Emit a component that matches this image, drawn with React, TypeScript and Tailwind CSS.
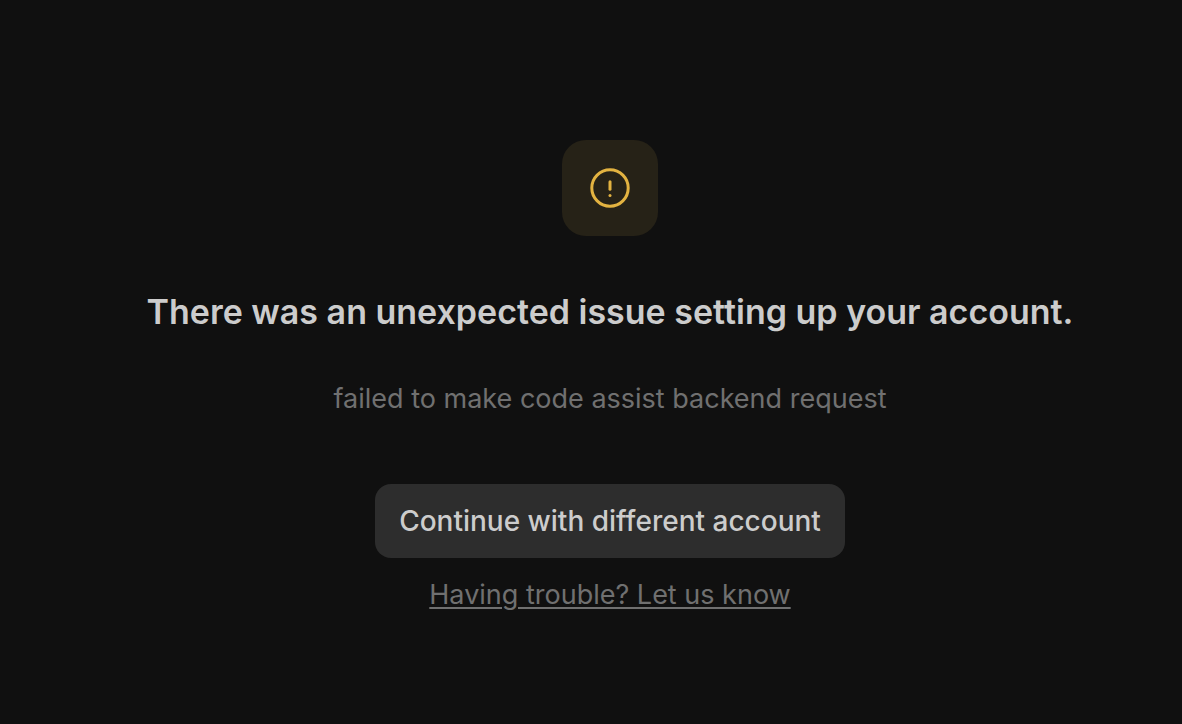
import React from 'react';

const AlertIcon: React.FC = () => (
  <svg width="40" height="40" viewBox="0 0 40 40" fill="none" stroke="currentColor" strokeWidth="3" strokeLinecap="round" aria-hidden="true">
    <circle cx="20" cy="20" r="18.2" />
    <path d="M20 13.7v7.6" />
    <circle cx="20" cy="27.4" r="1.5" fill="currentColor" stroke="none" />
  </svg>
);

export const AccountSetupError: React.FC = () => {
  return (
    <main className="min-h-screen bg-[#101010] pt-[140px] pl-[38px] flex flex-col items-center text-center font-['Inter',sans-serif] text-[27px] leading-[42px] text-[#707070]">
      <div className="size-24 rounded-3xl bg-[#262217] text-[#e3b341] flex items-center justify-center">
        <AlertIcon />
      </div>

      <h1 className="mt-[52px] text-[34px] leading-12 font-semibold text-[#cccccc]">
        There was an unexpected issue setting up your account.
      </h1>

      <p className="mt-[42px]">failed to make code assist backend request</p>

      <button type="button" className="mt-16 px-6 py-4 rounded-2xl bg-[#2d2d2d] text-[28px] font-medium text-[#cccccc]">
        Continue with different account
      </button>

      <a href="#" className="mt-4 underline decoration-2 underline-offset-3">
        Having trouble? Let us know
      </a>
    </main>
  );
};

export default AccountSetupError;
